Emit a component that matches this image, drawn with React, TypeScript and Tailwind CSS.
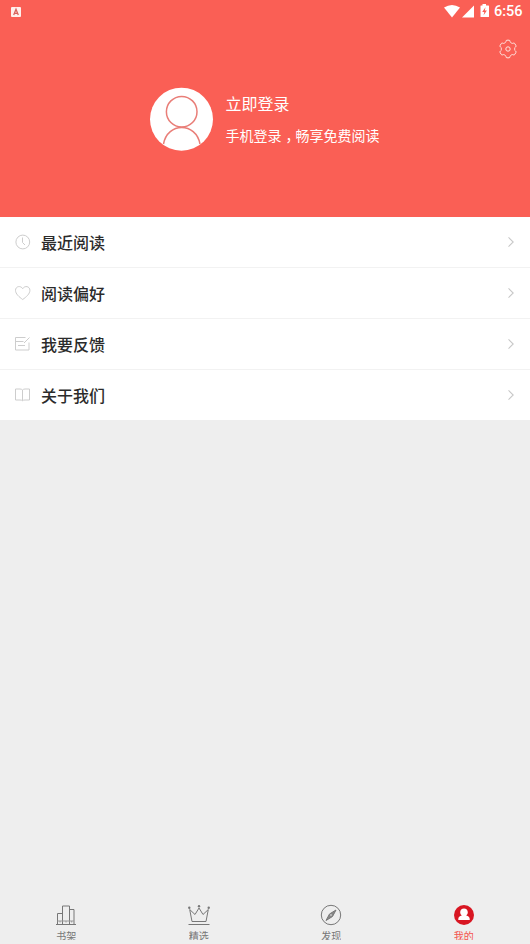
import type { ReactNode } from 'react';

function StatusBar() {
  return (
    <div className="flex h-[23px] items-center justify-between pl-[11px] pr-[7px]">
      <svg width="10" height="10" viewBox="0 0 10 10" className="block">
        <rect width="10" height="10" rx="1" fill="#fff0ec" />
        <path d="M2.7 8 5 2.3 7.3 8M3.6 6.3h2.8" fill="none" stroke="#d9625c" strokeWidth="1.3" />
      </svg>
      <div className="flex h-full items-center">
        <svg width="46" height="16" viewBox="444 4 46 16" fill="#fff" className="block">
          <path d="M444 7.6Q452 2.600 460 7.600L452 17.500Z" />
          <path d="M474 5.500v12h-12Z" />
          <path
            fillRule="evenodd"
            d="M482.500 4h3.500v1.500h2.500q.5 0 .5.500v10.500q0 .5-.5.500h-7.500q-.5 0-.5-.5V6q0-.5.5-.5h1.500ZM485.500 7.200l-3.300 4.700h2.100l-.7 3.300 3.300-4.700h-2.100Z"
          />
        </svg>
        <span className="ml-[4px] w-[29px] whitespace-nowrap font-['Roboto',sans-serif] text-[14.500px] font-medium leading-[23px]">6:56</span>
      </div>
    </div>
  );
}

function GearIcon() {
  return (
    <svg width="20" height="20" viewBox="0 0 20 20" fill="none" stroke="#ffe6e2" strokeWidth="1" strokeLinejoin="round" className="block">
      <path d="M7.300 3.600Q8 3.200 8 2.300 8 1.200 9 1.200h2q1 0 1 1.100 0 .9.700 1.300l1 .6q.8.4 1.500 0 1-.6 1.500.3l1.200 2q.5.900-.5 1.500-.7.400-.7 1.200v1.600q0 .8.700 1.200 1 .6.500 1.500l-1.200 2q-.5.900-1.500.3-.7-.4-1.500 0l-1 .6q-.7.400-.7 1.300 0 1.100-1 1.100H9q-1 0-1-1.100 0-.9-.7-1.300l-1-.6q-.8-.4-1.500 0-1 .6-1.500-.3l-1.200-2q-.5-.9.5-1.500.7-.4.7-1.200V9.200q0-.8-.7-1.200-1-.6-.5-1.500l1.200-2q.5-.9 1.500-.3.7.4 1.500 0Z" />
      <circle cx="10" cy="10" r="2.200" />
    </svg>
  );
}

function Avatar() {
  return (
    <svg width="64" height="64" viewBox="0 0 64 64" className="block">
      <circle cx="31.500" cy="32.200" r="31.500" fill="#fff" />
      <g fill="none" stroke="#e97e78" strokeWidth="1.500">
        <circle cx="31.700" cy="24.700" r="15.300" />
        <path d="M13.500 57C15.500 46 23.500 40.500 31.700 40.500S48 46 50 57" />
      </g>
    </svg>
  );
}

function LineIcon({ children }: { children: ReactNode }) {
  return (
    <svg width="16" height="16" viewBox="0 0 16 16" fill="none" stroke="#cdcdcd" strokeWidth="1" className="block">
      {children}
    </svg>
  );
}

const rows: { label: string; icon: ReactNode }[] = [
  {
    label: '最近阅读',
    icon: (
      <LineIcon>
        <circle cx="7.800" cy="8" r="6.900" />
        <path d="M7.500 3.500V8.500l2.500 2.500" />
      </LineIcon>
    ),
  },
  {
    label: '阅读偏好',
    icon: (
      <LineIcon>
        <path d="M7.700 14.500C4.200 12 .5 8.900.5 5.300.5 1.200 5.700.2 7.700 3.700 9.700.2 14.900 1.200 14.900 5.300 14.900 8.900 11.200 12 7.700 14.500Z" />
      </LineIcon>
    ),
  },
  {
    label: '我要反馈',
    icon: (
      <LineIcon>
        <path d="M10.500 1.500h-10v12.500h13.500V6.500M.5 5.500h8M3 9.500h7M9 7l5.500-5.500" />
      </LineIcon>
    ),
  },
  {
    label: '关于我们',
    icon: (
      <LineIcon>
        <path d="M7.500 3Q6.500 2 5 2H.5v11H5q1.700 0 2.500.7.8-.7 2.500-.7h4.500v-11H10Q8.500 2 7.500 3v10.700" />
      </LineIcon>
    ),
  },
];

function MenuRow({ label, icon }: { label: string; icon: ReactNode }) {
  return (
    <li className="flex h-[51px] items-center border-b border-[#f2f2f2] pl-[15px] pr-[15px] last:border-[#eee]">
      {icon}
      <span className="ml-[10px] flex-1 pb-[1px] text-[16px] font-medium leading-[24px] text-[#2b2b2b]">{label}</span>
      <svg width="9" height="12" viewBox="0 0 9 12" fill="none" stroke="#c8c8c8" strokeWidth="1.100" className="block">
        <path d="M2.500 1.300l4.700 4.700-4.700 4.700" />
      </svg>
    </li>
  );
}

function TabIcon({ children }: { children: ReactNode }) {
  return (
    <svg width="24" height="24" viewBox="0 0 24 24" fill="none" stroke="#777" strokeWidth="1" className="block shrink-0">
      {children}
    </svg>
  );
}

const tabs: { label: string; active?: boolean; icon: ReactNode }[] = [
  {
    label: '书架',
    icon: (
      <TabIcon>
        <path d="M2 21.500h20M3.500 21.500v-11h5M8.500 21.500v-18.500h7v18.500M15.500 6.500h4.500v15" />
        <path d="M3.500 18h16.500M6 18v1.500M12 18v1.500M17.700 18v1.500" stroke="#999" />
      </TabIcon>
    ),
  },
  {
    label: '精选',
    icon: (
      <TabIcon>
        <path d="M1.500 21.500h21M5 18.500 2.700 6.500l5.300 5 4-6.500 4 6.500 5.300-5L19 18.500Z" />
        <g fill="#777" stroke="none">
          <circle cx="2.300" cy="4.800" r="1.200" />
          <circle cx="12" cy="3.200" r="1.200" />
          <circle cx="21.700" cy="4.800" r="1.200" />
        </g>
      </TabIcon>
    ),
  },
  {
    label: '发现',
    icon: (
      <TabIcon>
        <circle cx="12" cy="12" r="9.700" />
        <path d="M17 7l-3.500 6.500L7 17.500l3.500-6.500Z" fill="#888" />
        <circle cx="12" cy="12" r=".8" fill="#eee" stroke="none" />
      </TabIcon>
    ),
  },
  {
    label: '我的',
    active: true,
    icon: (
      <TabIcon>
        <circle cx="12" cy="12" r="10" fill="#d81622" stroke="none" />
        <path d="M12 5.500c2.300 0 3.800 1.500 3.800 3.700 0 1.500-.7 2.500-1.600 3.200 2.200.6 3.500 1.700 3.500 3.700v.9H6.300v-.9c0-2 1.300-3.100 3.500-3.700-.9-.7-1.600-1.700-1.600-3.200 0-2.200 1.500-3.700 3.800-3.700Z" fill="#fff" stroke="none" />
      </TabIcon>
    ),
  },
];

export default function App() {
  return (
    <div className="flex h-[944px] w-[530px] flex-col overflow-hidden bg-[#eee] font-['Noto_Sans_CJK_SC',sans-serif]">
      <header className="h-[217px] shrink-0 bg-[#fa5f55] text-white">
        <StatusBar />
        <div className="flex justify-end pr-[12px] pt-[16px]">
          <GearIcon />
        </div>
        <div className="flex items-start pl-[150px] pt-[28px]">
          <Avatar />
          <div className="ml-[11.500px] pt-[4px]">
            <p className="text-[16px] leading-[24px]">立即登录</p>
            <p className="mt-[10px] whitespace-nowrap text-[14px] leading-[20px]">
              手机登录<span className="pl-[4px] pr-[3px] [font-feature-settings:'halt']">，</span>畅享免费阅读
            </p>
          </div>
        </div>
      </header>
      <ul className="shrink-0 bg-white">
        {rows.map((row) => (
          <MenuRow key={row.label} {...row} />
        ))}
      </ul>
      <nav className="mt-auto flex h-[41px] shrink-0">
        {tabs.map((tab) => (
          <div key={tab.label} className={tab.active ? 'flex flex-1 flex-col items-center text-[#f4534d]' : 'flex flex-1 flex-col items-center text-[#777]'}>
            {tab.icon}
            <span className="mt-[3px] h-[10px] overflow-hidden text-[10px] leading-[12px]">{tab.label}</span>
          </div>
        ))}
      </nav>
    </div>
  );
}
